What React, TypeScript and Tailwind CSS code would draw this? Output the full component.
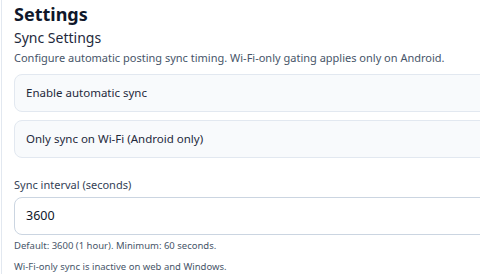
export default function App() {
  return (
    <div className="h-[274px] w-[480px] overflow-hidden bg-white font-['Noto_Sans','Open_Sans',sans-serif]">
      <div className="ml-[1px] h-full w-[560px] border-l border-[#e2e8f0] pl-[12px] pt-[3px]">
        <h1 className="text-[18px] font-bold leading-[22px] text-[#0f172a]">Settings</h1>
        <h2 className="mt-[3px] text-[14px] leading-[20px] text-[#1e293b]">Sync Settings</h2>
        <p className="mt-[2px] text-[11px] leading-[16px] text-[#475569]">
          Configure automatic posting sync timing. Wi-Fi-only gating applies only on Android.
        </p>
        <div className="mt-[8px] flex flex-col gap-[8px]">
          <div className="flex h-[38px] items-center rounded-[8px] border border-[#e2e8f0] bg-[#f8fafc] px-[11px] text-[11.5px] text-[#1e293b]">
            Enable automatic sync
          </div>
          <div className="flex h-[38px] items-center rounded-[8px] border border-[#e2e8f0] bg-[#f8fafc] px-[11px] text-[11.5px] text-[#1e293b]">
            Only sync on Wi-Fi (Android only)
          </div>
        </div>
        <label className="mt-[19px] block text-[11px] leading-[16px] text-[#334155]">Sync interval (seconds)</label>
        <div className="mt-[4px] flex h-[38px] items-center rounded-[8px] border border-[#cbd5e1] bg-white px-[11px] text-[12.5px] text-[#0f172a]">
          3600
        </div>
        <p className="mt-[4px] text-[9.5px] leading-[14px] text-[#475569]">Default: 3600 (1 hour). Minimum: 60 seconds.</p>
        <p className="mt-[7px] text-[9.5px] leading-[14px] text-[#475569]">Wi-Fi-only sync is inactive on web and Windows.</p>
      </div>
    </div>
  );
}
